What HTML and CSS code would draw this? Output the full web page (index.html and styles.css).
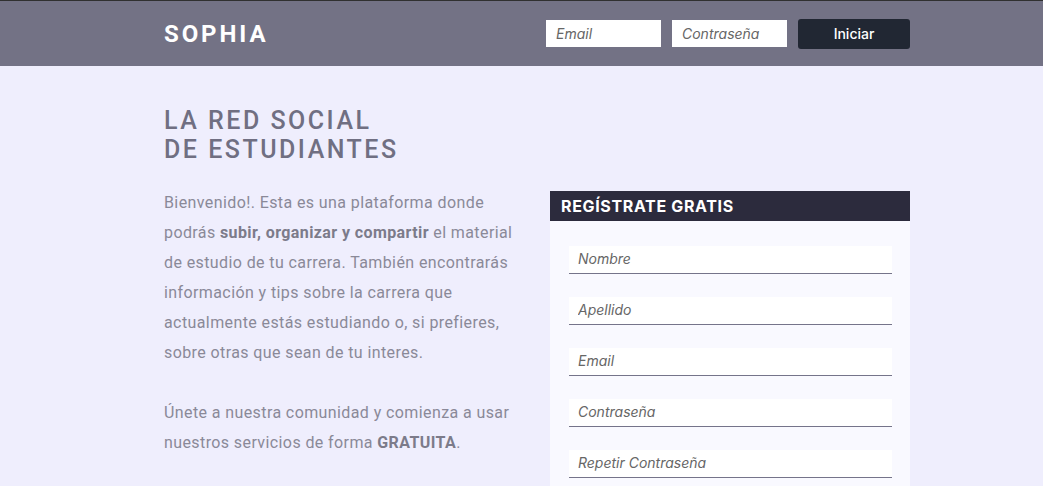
FILE: index.html
```html
<!DOCTYPE html>
<html lang="es">
<head>
<meta charset="utf-8">
<title>Sophia</title>
<link rel="stylesheet" href="styles.css">
</head>
<body>
<header class="topbar">
  <div class="wrap topbar-inner">
    <div class="logo">SOPHIA</div>
    <form class="login">
      <input class="login-input" type="text" placeholder="Email">
      <input class="login-input" type="password" placeholder="Contraseña">
      <button class="login-btn" type="button">Iniciar</button>
    </form>
  </div>
</header>
<main class="wrap main">
  <section class="intro">
    <h1 class="title">LA RED SOCIAL<br>DE ESTUDIANTES</h1>
    <p class="text">Bienvenido!. Esta es una plataforma donde podrás <b>subir, organizar y compartir</b> el material de estudio de tu carrera. También encontrarás información y tips sobre la carrera que actualmente estás estudiando o, si prefieres, sobre otras que sean de tu interes.</p>
    <p class="text">Únete a nuestra comunidad y comienza a usar nuestros servicios de forma <b>GRATUITA</b>.</p>
  </section>
  <section class="card">
    <h2 class="card-title">REGÍSTRATE GRATIS</h2>
    <form class="card-body">
      <input class="field" type="text" placeholder="Nombre">
      <input class="field" type="text" placeholder="Apellido">
      <input class="field" type="text" placeholder="Email">
      <input class="field" type="password" placeholder="Contraseña">
      <input class="field" type="password" placeholder="Repetir Contraseña">
    </form>
  </section>
</main>
</body>
</html>
```

FILE: styles.css
```css
* { box-sizing: border-box; }
html, body { margin: 0; padding: 0; }
body {
  background: #efeefd;
  font-family: Roboto, "Liberation Sans", sans-serif;
}
.wrap {
  width: 746px;
  margin-left: 164px;
}
.topbar {
  background: #737285;
  border-top: 1px solid #303030;
  height: 66px;
}
.topbar-inner {
  display: flex;
  align-items: center;
  justify-content: space-between;
  height: 65px;
}
.logo {
  color: #fff;
  font-weight: 700;
  font-size: 24px;
  letter-spacing: 2.9px;
  margin-top: 1px;
}
.login {
  display: flex;
  align-items: center;
  gap: 11px;
}
.login-input {
  width: 115px;
  height: 27px;
  border: none;
  background: #fff;
  padding: 0 10px 0;
  font-family: Inter, "Liberation Sans", sans-serif;
  font-size: 14px;
  font-style: italic;
  margin-top: -1px;
}
.login-input::placeholder, .field::placeholder { color: #666; }
.login-btn {
  width: 112px;
  height: 30px;
  border: none;
  border-radius: 3px;
  background: #212733;
  color: #fff;
  font-family: Inter, "Liberation Sans", sans-serif;
  font-size: 14px;
  font-weight: 500;
  margin-top: 0;
}
.main {
  display: flex;
  justify-content: space-between;
  align-items: flex-start;
  padding-top: 40px;
}
.intro { width: 360px; }
.title {
  margin: 0;
  color: #706f82;
  font-size: 25px;
  font-weight: 500;
  line-height: 29px;
  letter-spacing: 2.5px;
}
.text {
  margin: 24px 0 30px;
  color: #8a8998;
  font-size: 16px;
  line-height: 30px;
  letter-spacing: 0.4px;
  width: 360px;
}
.text + .text { margin-top: 0; }
.text b { color: #7c7b8a; font-weight: 700; }
.card {
  width: 360px;
  margin-top: 85px;
  background: #f9f9ff;
}
.card-title {
  margin: 0;
  height: 30px;
  background: #2c2b3d;
  color: #fff;
  font-family: Inter, "Liberation Sans", sans-serif;
  font-size: 16px;
  font-weight: 700;
  letter-spacing: 0.65px;
  line-height: 30px;
  padding-left: 11px;
}
.card-body {
  display: flex;
  flex-direction: column;
  gap: 23px;
  padding: 25px 18px 20px 19px;
}
.field {
  height: 28px;
  border: none;
  border-bottom: 1px solid #75748a;
  background: #fff;
  padding: 0 9px 3px;
  font-family: Inter, "Liberation Sans", sans-serif;
  font-size: 14px;
  font-style: italic;
}
```
